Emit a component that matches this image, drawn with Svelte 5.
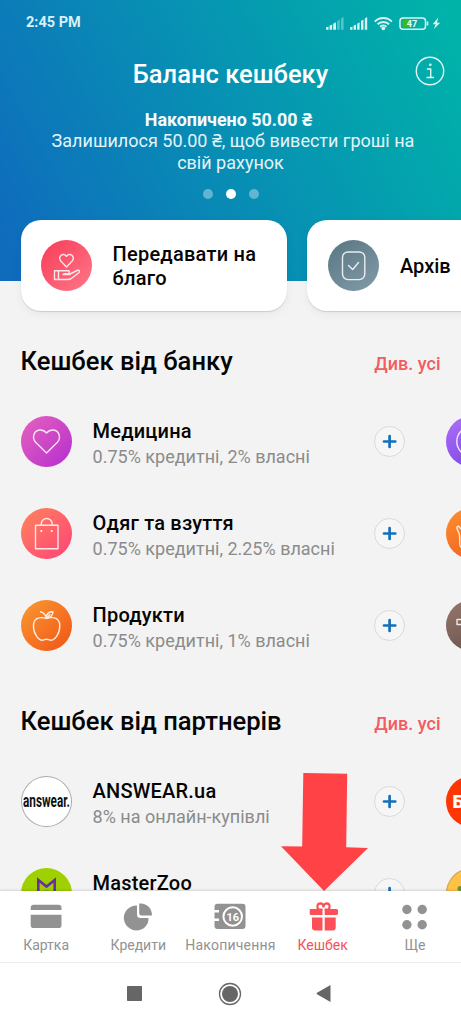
<script>
  const bank = [
    { name: 'Медицина', rate: '0.75% кредитні, 2% власні', icon: 'heart', next: 'violet' },
    { name: 'Одяг та взуття', rate: '0.75% кредитні, 2.25% власні', icon: 'bag', next: 'orange' },
    { name: 'Продукти', rate: '0.75% кредитні, 1% власні', icon: 'apple', next: 'brown' }
  ];
  const partners = [
    { name: 'ANSWEAR.ua', rate: '8% на онлайн-купівлі', icon: 'answear', next: 'red' },
    { name: 'MasterZoo', icon: 'zoo', next: 'yellow' }
  ];
</script>

{#snippet row(item)}
  <div class="row">
    <div class="disc {item.icon}">
      {#if item.icon === 'answear'}
        <svg width="51" height="51" viewBox="0 0 51 51"><text class="brand" x="2" y="31" textLength="47" lengthAdjust="spacingAndGlyphs">answear.</text></svg>
      {:else}
        <svg width="51" height="51" viewBox="0 0 51 51">
          {#if item.icon === 'heart'}
            <path d="M25.500 37 L14.600 26.200 C10.800 22 12.500 14.500 18.700 14 C22 13.800 24 15.300 25.500 17 C27 15.300 29 13.800 32.300 14 C38.500 14.500 40.200 22 36.400 26.200Z" />
          {:else if item.icon === 'bag'}
            <path d="M14.500 17.200H37V40.800H14.500ZM20.300 17V15.500a5.400 5 0 0 1 10.800 0V17" />
            <circle class="dot-fill" cx="20.300" cy="23" r="1.100" /><circle class="dot-fill" cx="30.700" cy="23" r="1.100" />
          {:else if item.icon === 'apple'}
            <path d="M25.500 18.500 C22 17.500 12.500 15.500 12.500 26 C12.500 34 17.500 40.200 21.300 40.200 C23.300 40.200 23.700 39.200 25.500 39.200 C27.400 39.200 27.800 40.200 29.800 40.200 C33.600 40.200 38.800 34 38.800 26 C38.800 15.500 29 17.500 25.500 18.500ZM25.500 18.500 C24.800 15.200 22.800 12.600 19.500 11.800M25.500 17.800 C25.200 13.500 28 11.600 32 11.800 C32 15.200 29.500 18 25.500 17.800L29 14.500" />
          {:else}
            <path class="cat" d="M17.300 51V12L25.500 18.500L33.700 12V51M23.300 24H28M23 29.500H28.500" />
          {/if}
        </svg>
      {/if}
    </div>
    <div class="info">
      <div class="name">{item.name}</div>
      {#if item.rate}<div class="rate">{item.rate}</div>{/if}
    </div>
    <div class="plus"><svg width="31" height="31" viewBox="0 0 31 31"><path d="M10 15.500H21.300M15.600 10V21" /></svg></div>
    <div class="disc {item.next}">
      {#if item.next === 'red'}
        <span class="letter">Б</span>
      {:else}
        <svg width="51" height="51" viewBox="0 0 51 51">
          {#if item.next === 'violet'}
            <circle cx="25.500" cy="25.500" r="14.700" />
          {:else if item.next === 'orange'}
            <path d="M16.500 38.800H14.500C12.800 36 14.500 31 13.300 26L11 20.500V18.800L12.500 18L15.500 21.500L18 20.500" />
          {:else if item.next === 'brown'}
            <path d="M11 19.500H26V24.500H11Z" />
          {:else}
            <circle class="leaf" cx="14" cy="20.500" r="2.500" />
          {/if}
        </svg>
      {/if}
    </div>
  </div>
{/snippet}

<div class="phone">
  <div class="content">
    <header>
      <div class="status">
        <span>2:45 PM</span>
        <svg width="116" height="16" viewBox="325 14 116 16">
          <g fill="#d9f3f1">
            <path d="M326 28.700v-2.200l2.500-1v3.200zM329.600 28.700v-4l2.500-1.200v5.200zM333.200 28.700v-6l2.800-1.500v7.500z" />
            <path opacity=".4" d="M337.200 28.700v-8.700l2.500-1.500v10.200zM341 28.700V17.500l2.600-1.500v12.700z" />
            <path d="M350 28.700v-2.200l2.500-1v3.200zM353.600 28.700v-4l2.400-1.200v5.200zM357.200 28.700v-6l2.400-1.500v7.500zM361 28.700v-8.700l2.400-1.500v10.200zM364.800 28.700V17.500l2.400-1.500v12.700z" />
            <circle cx="383.300" cy="27.300" r="1.900" />
            <path d="M438.300 16.500l-5.600 6.800h3l-2 5 6.500-6.600h-3.200z" />
          </g>
          <g fill="none" stroke="#d9f3f1" stroke-width="2">
            <path d="M374.800 20.600a12 12 0 0 1 17 0M377.500 23.300a8.200 8.200 0 0 1 11.600 0M380.100 25.700a4.600 4.600 0 0 1 6.400 0" />
            <rect x="400" y="16.900" width="25.500" height="11.300" rx="3" stroke-width="1.500" />
            <path d="M427.500 20.500v4" stroke-width="1.700" />
          </g>
          <path fill="#32bd26" d="M402.500 19h9v7.200h-9z" />
          <text x="412" y="26.100" text-anchor="middle" class="battery">47</text>
        </svg>
      </div>
      <div class="titlebar">
        <i></i>
        <h1>Баланс кешбеку</h1>
        <svg width="30" height="30" viewBox="0 0 30 30"><circle cx="15" cy="15" r="13.700" /><path d="M12 13H15.700V21.500M11.500 21.500H19" /><circle class="tip" cx="15.300" cy="8.800" r="1.300" /></svg>
      </div>
      <div class="balance"><b>Накопичено 50.00 ₴</b><span class="rest">Залишилося 50.00 ₴, щоб вивести гроші на</span><span>свій рахунок</span></div>
      <div class="dots"><i></i><i class="on"></i><i></i></div>
    </header>

    <div class="cards">
      <div class="card">
        <div class="disc charity">
          <svg width="51" height="51" viewBox="0 0 51 51"><path d="M25.500 27L20 21.300C17.500 18.500 19 14.700 22 14.500C23.800 14.400 24.800 15.200 25.500 16.300C26.200 15.200 27.200 14.400 29 14.500C32 14.700 33.500 18.500 31 21.300ZM13.500 30.700H17.500V39.500H13.500ZM17.500 30.700H27.500C28.800 31 28.500 33.500 27 33.700H23M29 34L36 30.500C38.500 29.800 39.200 31.500 37.500 33L30 38.700L27 39.500H17.500M22 34.500H29" /></svg>
        </div>
        <span class="wide">Передавати на<br />благо</span>
      </div>
      <div class="card">
        <div class="disc archive">
          <svg width="51" height="51" viewBox="0 0 51 51"><rect x="14.500" y="12" width="22.300" height="27.600" rx="5.500" /><path d="M20.500 25.500L24.700 29.500L30.500 22.500" /></svg>
        </div>
        <span class="single">Архів</span>
      </div>
    </div>

    <section>
      <div class="heading"><h2>Кешбек від банку</h2><a href="#bank">Див. усі</a></div>
      {#each bank as item}{@render row(item)}{/each}
    </section>
    <section class="partners">
      <div class="heading"><h2>Кешбек від партнерів</h2><a href="#partners">Див. усі</a></div>
      {#each partners as item}{@render row(item)}{/each}
    </section>
    <svg class="pointer" width="88" height="118" viewBox="0 0 88 118"><path d="M22.300 0L66.200 .8L65.200 74.300L87 75L43 118L0 73.200L21.200 73.500Z" fill="#ff4245" /></svg>
  </div>

  <nav>
    <div class="tab"><svg width="34" height="30" viewBox="0 0 34 30"><path d="M1.700 8V6.800a3 3 0 0 1 3-3H29.500a3 3 0 0 1 3 3V8.900H1.700ZM1.700 13.700H32.500V24.200a2.800 2.800 0 0 1-2.800 2.800H4.500a2.800 2.800 0 0 1-2.800-2.800Z" /></svg><span>Картка</span></div>
    <div class="tab"><svg width="34" height="30" viewBox="0 0 34 30"><path d="M16 4.500V13.500Q16 17 19.500 17H27.500C28 24 22 29.500 15.500 29.500A13 13 0 0 1 2.800 17C2.800 10 8.500 4.300 16 4.500ZM18.200 2.500C25 1.500 31 7 31 13.800Q31 14.500 30.300 14.500H20.500Q18.200 14.500 18.200 12.200Z" /></svg><span>Кредити</span></div>
    <div class="tab"><svg width="34" height="30" viewBox="0 0 34 30"><path d="M4.500 2.700H29.500a3 3 0 0 1 3 3V25a3 3 0 0 1-3 3H4.500a3 3 0 0 1-3-3V20H6V17.500H1.500V11.500H6V9H1.500V5.700a3 3 0 0 1 3-3Z" /><circle class="coin" cx="19.700" cy="15.500" r="9.300" /><text x="19.700" y="19.500" text-anchor="middle">16</text></svg><span class="long">Накопичення</span></div>
    <div class="tab active"><svg width="34" height="30" viewBox="0 0 34 30"><path d="M4 8H30.500a1.500 1.500 0 0 1 1.500 1.500V12.500a1.500 1.500 0 0 1-1.500 1.500H18.700V8H16.500V14H5.200a1.500 1.500 0 0 1-1.500-1.500V9.500ZM6 16.500H16.500V29.500H9a3 3 0 0 1-3-3ZM18.700 16.500H29.700V26.500a3 3 0 0 1-3 3H18.700Z" /><path class="bow" d="M16.300 8.500H12.500C10.500 6 11.300 2.500 14.200 2.300C16.500 2.300 17.500 4.500 17.500 6.500C17.500 4.500 18.500 2.300 20.800 2.300C23.700 2.500 24.500 6 22.500 8.500H18.700" /></svg><span>Кешбек</span></div>
    <div class="tab"><svg width="34" height="30" viewBox="0 0 34 30"><circle cx="8.900" cy="8.500" r="4.700" /><circle cx="24.200" cy="8.500" r="4.700" /><circle cx="8.900" cy="23.800" r="4.700" /><circle cx="24.200" cy="23.800" r="4.700" /></svg><span>Ще</span></div>
  </nav>
  <div class="system">
    <svg width="15" height="15" viewBox="0 0 15 15"><rect width="15" height="15" rx=".7" /></svg>
    <svg width="24" height="24" viewBox="0 0 24 24"><circle cx="12" cy="12" r="8" /><circle class="ring" cx="12" cy="12" r="10.500" /></svg>
    <svg width="15" height="17" viewBox="0 0 15 17"><path d="M14.500 0V17L1 9.200Q0 8.500 1 7.800Z" /></svg>
  </div>
</div>

<style>
  :global(body) { background: #fff; }
  .phone { width: 461px; height: 1024px; display: flex; flex-direction: column; overflow: hidden; font-family: Roboto, "Noto Sans", sans-serif; color: #050505; }
  .content { position: relative; height: 891px; flex: none; overflow: hidden; background: #f3f3f3; }
  header { height: 281px; box-sizing: border-box; background: linear-gradient(61deg, #0f6cbd 5%, #0791b3 52%, #00b3a9 97%); color: #fff; }
  .status { height: 45px; padding: 0 20px 0 26px; display: flex; align-items: center; justify-content: space-between; font-size: 14.500px; font-weight: 700; color: #d9f0f5; }
  .battery { font: 700 9px Roboto, sans-serif; fill: #e6fff8; }
  .titlebar { height: 58px; padding: 0 16px; display: grid; grid-template-columns: 30px 1fr 30px; align-items: center; }
  .titlebar svg { margin-top: -7px; fill: none; stroke: #e0f7f6; stroke-width: 1.400; }
  .titlebar svg .tip { fill: #e0f7f6; stroke: none; }
  h1, h2 { margin: 0; font-weight: 500; }
  h1 { font-size: 25.500px; text-align: center; }
  .balance { display: flex; flex-direction: column; margin-top: 6px; text-align: center; font-size: 18px; line-height: 21.300px; color: #e4f4f8; }
  .balance b { color: #f5fcff; font-size: 17.900px; padding-right: 4px; }
  .balance .rest { padding-left: 5px; }
  .dots { display: flex; justify-content: center; gap: 13px; margin-top: 16px; }
  .dots i { width: 10px; height: 10px; border-radius: 50%; background: #62b5d0; }
  .dots .on { background: #fff; }
  .cards { position: relative; display: flex; gap: 20px; margin: -61px 0 0 20.500px; }
  .card { box-sizing: border-box; width: 266.500px; height: 91px; flex: none; display: flex; align-items: center; gap: 20.500px; padding-left: 20.500px; background: #fff; border-radius: 20px; box-shadow: 0 1px 1px #0002, 0 3px 10px #0000000d; font-size: 20px; font-weight: 500; line-height: 24.500px; }
  .wide { letter-spacing: .25px; padding-top: 1px; }
  .single { padding: 2px 0 0 1px; }
  .disc { width: 51px; height: 51px; flex: none; border-radius: 50%; overflow: hidden; display: grid; place-items: center; }
  .disc svg { fill: none; stroke: #fff; stroke-opacity: .85; stroke-width: 1.400; stroke-linejoin: round; stroke-linecap: round; }
  .disc .dot-fill { fill: #fff; stroke: none; }
  .charity { background: linear-gradient(135deg, #f83b58, #ff7888); }
  .archive { background: linear-gradient(145deg, #587683, #839ba8); }
  .heart { background: linear-gradient(135deg, #e563bd, #b52dd0); }
  .bag { background: linear-gradient(135deg, #ff855b, #fe4278); }
  .apple { background: linear-gradient(135deg, #f99a32, #f15315); }
  .violet { background: linear-gradient(155deg, #af70fb, #7743e2); }
  .orange { background: linear-gradient(155deg, #fc912f, #f35b1c); }
  .brown { background: linear-gradient(155deg, #98776c, #65514a); }
  .answear { background: #fff; box-shadow: inset 0 0 0 1px #aaa; }
  .disc .brand { font: 700 18.500px Roboto, sans-serif; fill: #111; stroke: none; }
  .zoo { background: #9fd000; }
  .zoo svg { stroke-opacity: 1; }
  .disc .cat { stroke: #69309c; stroke-width: 2.600; stroke-linejoin: miter; }
  .red { background: #ff3600; place-items: center start; }
  .letter { margin-left: 7px; color: #fff; font: 900 18px Roboto, sans-serif; }
  .yellow { background: #ffc246; box-shadow: inset 0 0 0 1px #c5a65e; }
  .disc .leaf { fill: #60943a; stroke: none; }
  section { padding-top: 27px; }
  .partners { padding-top: 26px; }
  .heading { display: flex; justify-content: space-between; align-items: center; height: 46px; padding: 0 20.500px; margin-bottom: 11px; }
  .partners .heading { margin-top: 1px; }
  h2 { font-size: 25.600px; }
  .heading a { font-size: 18px; font-weight: 500; color: #f25b61; text-decoration: none; padding-top: 5px; }
  .row { height: 92px; margin-left: 20.600px; display: grid; grid-template-columns: 51px 302px 31px 92px; align-items: center; }
  .row .disc:last-child { margin-left: 41px; }
  .info { height: 51px; padding: 2px 0 0 21px; box-sizing: border-box; }
  .name { font-size: 20px; font-weight: 500; line-height: 26px; letter-spacing: .2px; }
  .rate { font-size: 18px; line-height: 25px; color: #8b8b8b; white-space: nowrap; }
  .plus { width: 31px; height: 31px; box-sizing: border-box; border: 1px solid #dadada; border-radius: 50%; background: #f6f6f6; }
  .plus svg { display: block; margin: -1px; stroke: #156fbb; stroke-width: 2.700; stroke-linecap: round; }
  .pointer { position: absolute; left: 281px; top: 773px; }
  nav { height: 72px; box-sizing: border-box; flex: none; display: grid; grid-template-columns: repeat(5, 1fr); background: #fff; border-bottom: 1px solid #eee; padding-top: 10px; position: relative; box-shadow: 0 -1px 2px #0002; }
  .tab { display: flex; flex-direction: column; align-items: center; color: #929292; font-size: 14px; line-height: 16px; gap: 6px; }
  .tab svg { fill: #929292; }
  .tab text { fill: #fff; font: 700 11px Roboto, sans-serif; }
  .long { letter-spacing: .2px; }
  .coin { fill: none; stroke: #fff; stroke-width: 2; }
  .active { color: #f45158; }
  .active svg { fill: #fc5056; }
  .bow { fill: none; stroke: #fc5056; stroke-width: 2.200; }
  .system { flex: 1; display: flex; align-items: center; padding-left: 127px; background: #fff; }
  .system svg { fill: #666; }
  .system svg:nth-child(2) { margin: 0 74px 0 76px; }
  .ring { fill: none; stroke: #666; stroke-width: 1.300; }
</style>
